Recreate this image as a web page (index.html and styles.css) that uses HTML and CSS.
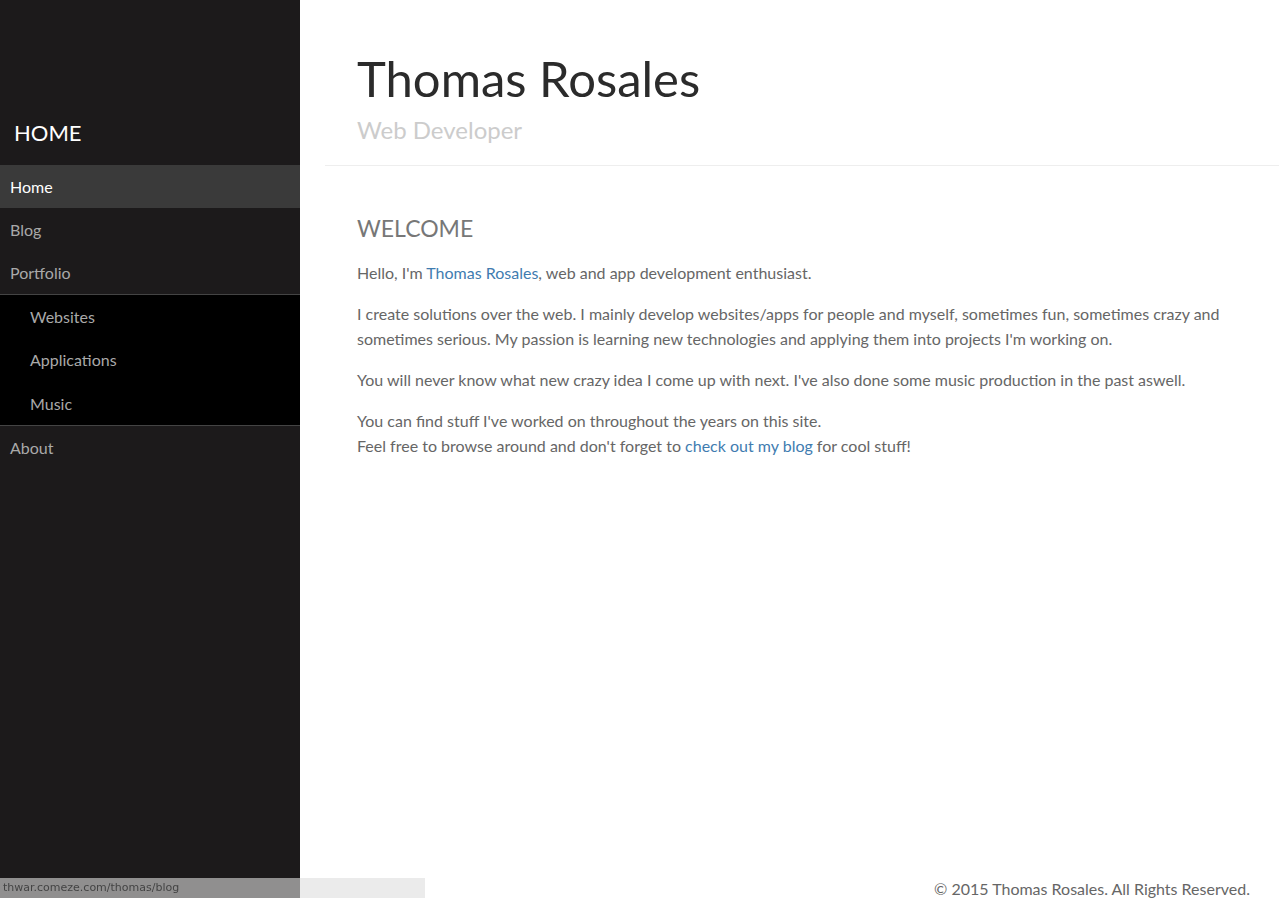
FILE: index.html
```html
<!DOCTYPE html>
<html>
<head>
<meta charset="utf-8">
<link rel="stylesheet" href="styles.css">
</head>
<body>
<div class="page">
  <aside class="sidebar">
    <div class="brand">HOME</div>
    <nav class="nav">
      <a class="nav-item active">Home</a>
      <a class="nav-item">Blog</a>
      <a class="nav-item">Portfolio</a>
      <div class="subnav">
        <a class="sub-item">Websites</a>
        <a class="sub-item">Applications</a>
        <a class="sub-item">Music</a>
      </div>
      <a class="nav-item">About</a>
    </nav>
  </aside>
  <main class="main">
    <header class="header">
      <h1 class="title">Thomas Rosales</h1>
      <h2 class="subtitle">Web Developer</h2>
    </header>
    <section class="content">
      <h3 class="heading">WELCOME</h3>
      <p>Hello, I'm <a class="link">Thomas Rosales</a>, web and app development enthusiast.</p>
      <p>I create solutions over the web. I mainly develop websites/apps for people and myself, sometimes fun, sometimes crazy and sometimes serious. My passion is learning new technologies and applying them into projects I'm working on.</p>
      <p>You will never know what new crazy idea I come up with next. I've also done some music production in the past aswell.</p>
      <p>You can find stuff I've worked on throughout the years on this site.<br>Feel free to browse around and don't forget to <a class="link">check out my blog</a> for cool stuff!</p>
    </section>
    <footer class="footer">© 2015 Thomas Rosales. All Rights Reserved.</footer>
  </main>
</div>
<div class="status">thwar.comeze.com/thomas/blog</div>
</body>
</html>
```
FILE: styles.css
```css
* { box-sizing: border-box; }
html, body { margin: 0; padding: 0; height: 100%; }
body { font-family: "Lato", "Liberation Sans", sans-serif; background: #fff; }
.page { display: flex; min-height: 898px; height: 100%; }
.sidebar { width: 300px; flex: none; background: #1c1a1b; padding-top: 119px; }
.brand { color: #fff; font-size: 22px; padding: 0 14px; height: 46px; line-height: 28px; }
.nav { display: flex; flex-direction: column; }
.nav-item { display: block; color: #a9a9a9; font-size: 16px; height: 43px; line-height: 43px; padding-left: 10px; }
.nav-item.active { background: #3a3a3a; color: #fff; }
.subnav { background: #000; border-top: 1px solid #444; border-bottom: 1px solid #444; }
.sub-item { display: block; color: #a9a9a9; font-size: 16px; height: 43.3px; line-height: 43px; padding-left: 30px; }
.main { flex: 1; display: flex; flex-direction: column; padding-left: 25px; }
.header { border-bottom: 1px solid #eee; padding: 49px 0 20px 32px; }
.title { margin: 0; font-weight: 400; font-size: 49px; line-height: 58px; color: #2b2b2b; }
.subtitle { margin: 8px 0 0; font-weight: 400; font-size: 24px; line-height: 30px; color: #ccc; }
.content { padding: 47px 32px 0; flex: 1; color: #666; font-size: 16px; line-height: 25px; }
.heading { margin: 0 0 17px; font-weight: 400; font-size: 23px; line-height: 30px; color: #777; }
.content p { margin: 0 0 16px; }
.link { color: #3f7cb0; }
.footer { text-align: right; padding: 0 29px 0 0; color: #666; font-size: 16px; line-height: 22px; height: 20px; }
.status { position: fixed; left: 0; bottom: 0; width: 425px; height: 20px; background: rgba(221,221,221,0.6); color: #444; font-family: "DejaVu Sans", sans-serif; font-size: 11px; line-height: 20px; padding-left: 3px; }
```
